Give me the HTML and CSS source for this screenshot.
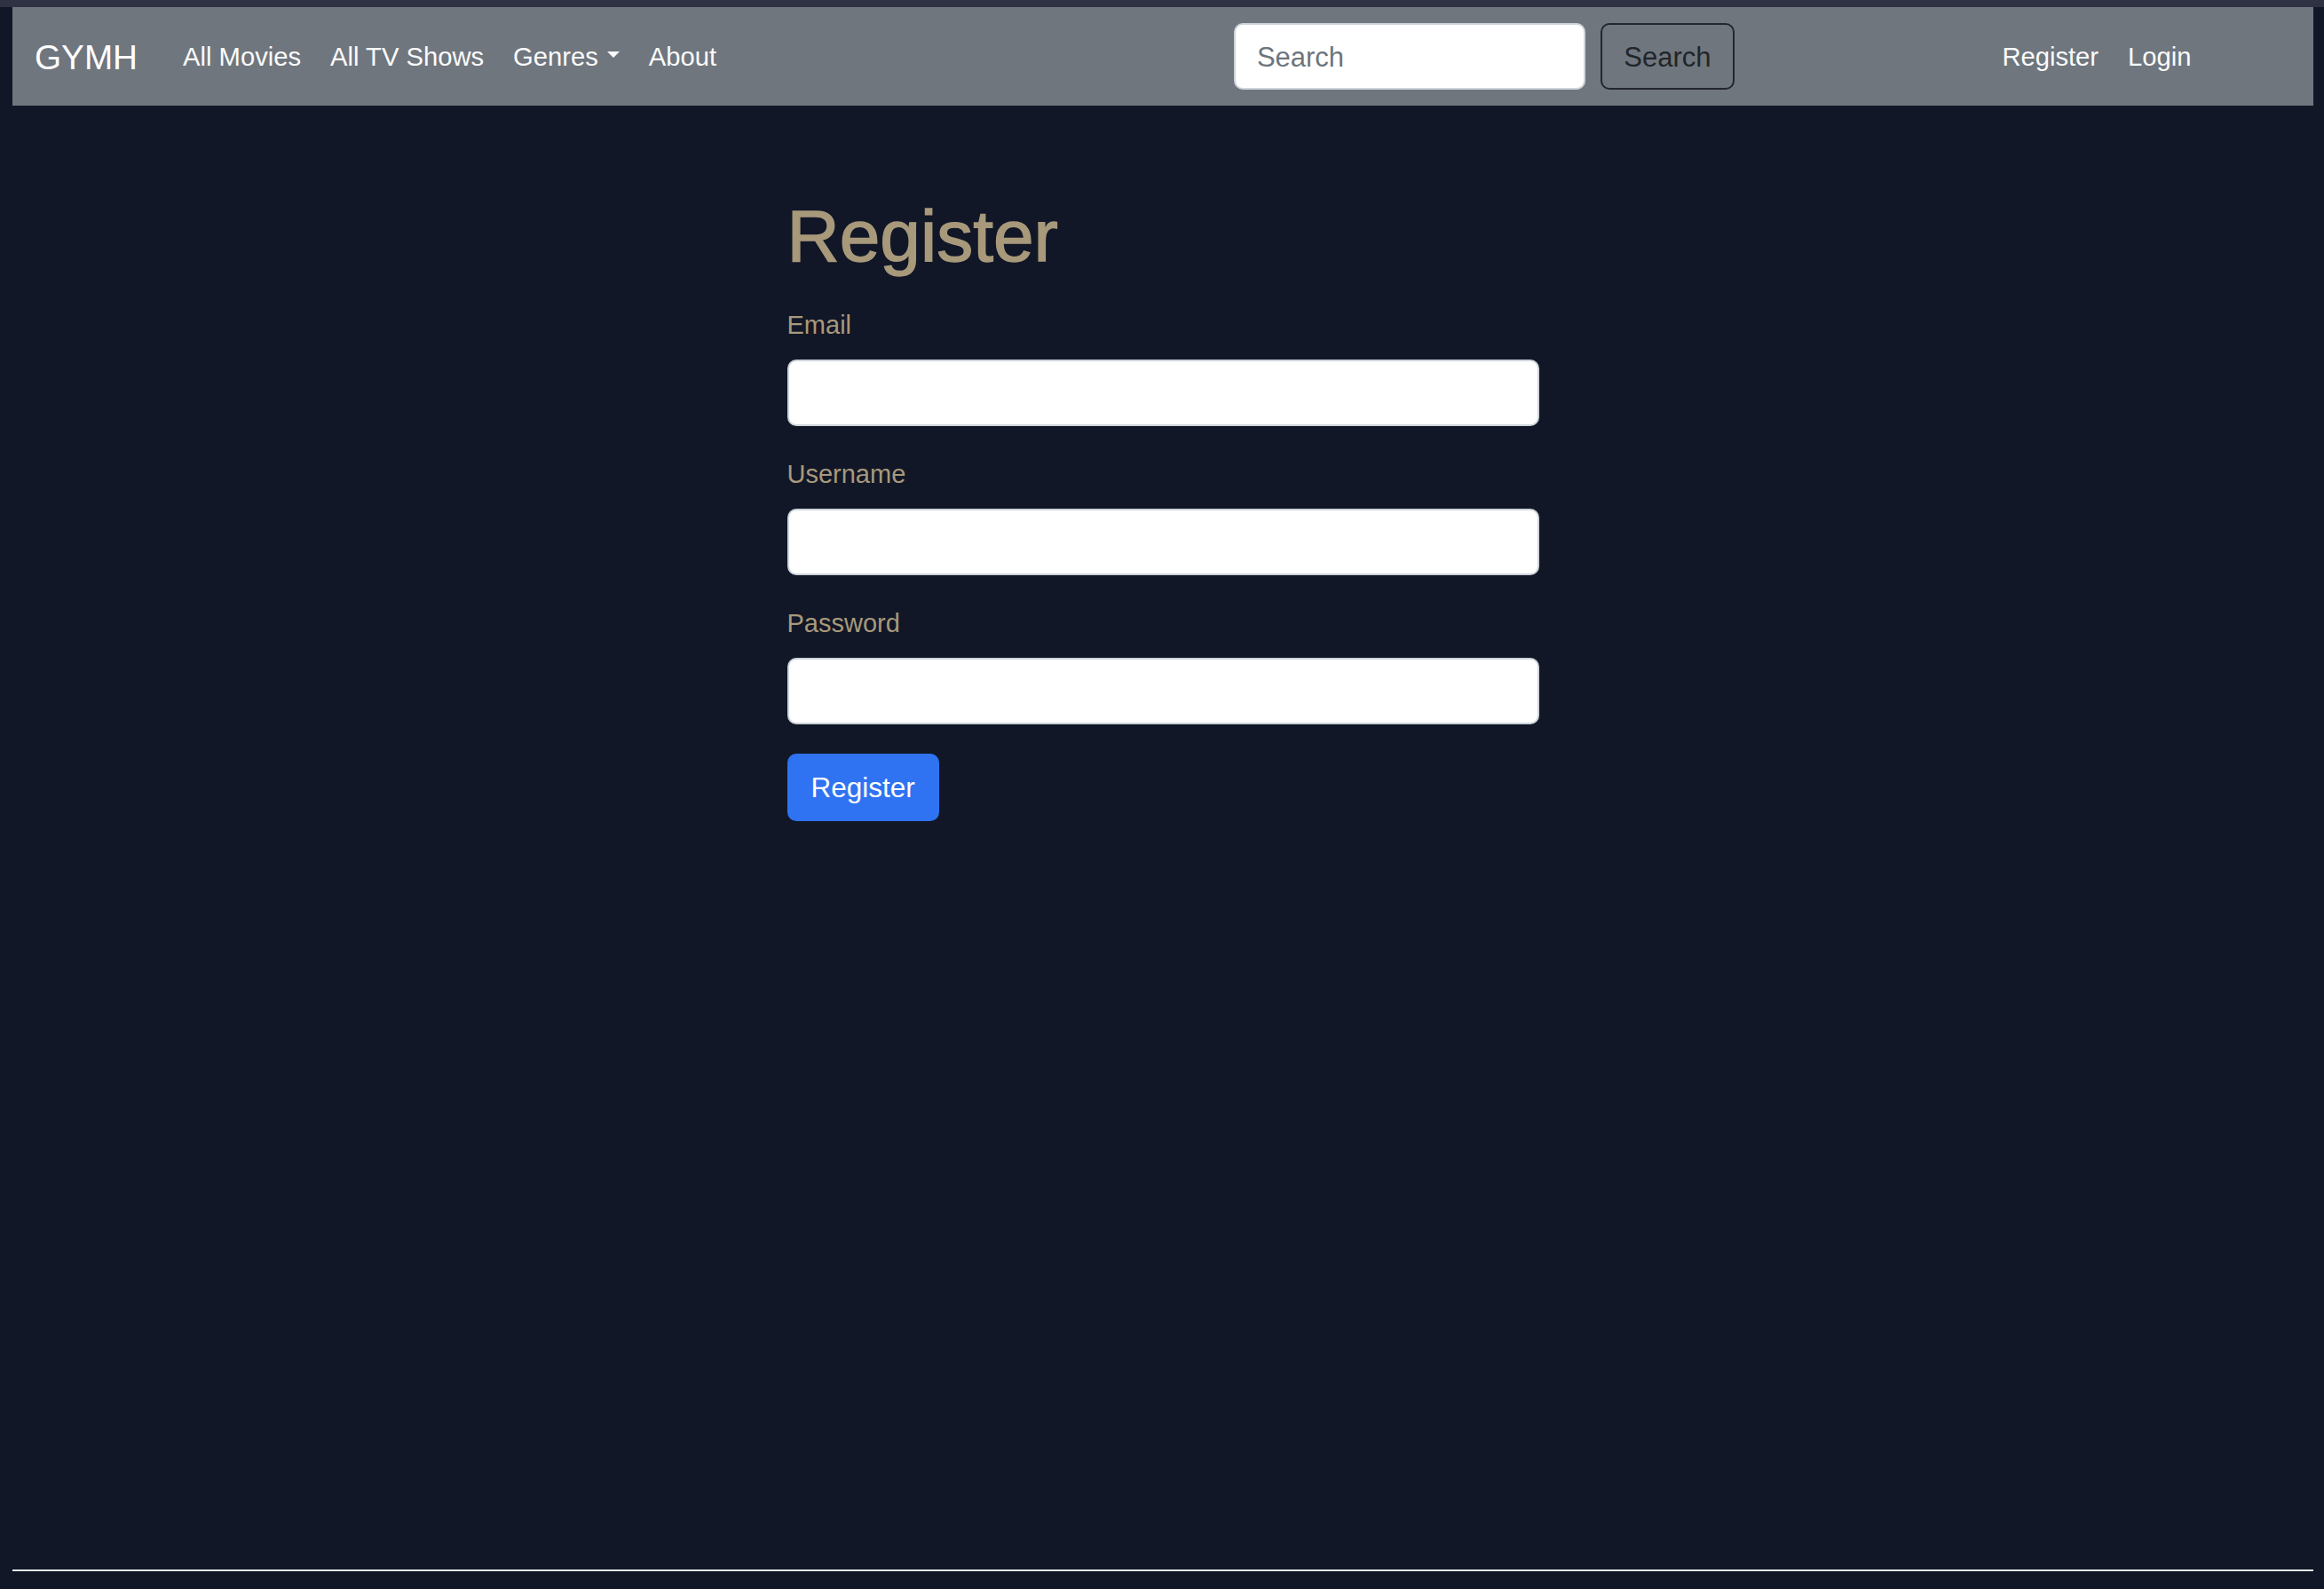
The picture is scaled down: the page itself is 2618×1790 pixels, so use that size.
FILE: index.html
```html
<!DOCTYPE html>
<html lang="en">
<head>
<meta charset="utf-8">
<title>Register - GYMH</title>
<link rel="stylesheet" href="styles.css">
</head>
<body>
<div class="topstrip"></div>
<div class="page">
  <nav class="navbar">
    <a class="brand" href="#">GYMH</a>
    <ul class="nav-links">
      <li><a class="nav-link" href="#">All Movies</a></li>
      <li><a class="nav-link" href="#">All TV Shows</a></li>
      <li><a class="nav-link" href="#">Genres<span class="caret"></span></a></li>
      <li><a class="nav-link" href="#">About</a></li>
    </ul>
    <form class="search-form">
      <input class="search-input" type="search" placeholder="Search">
      <button class="search-btn" type="button">Search</button>
    </form>
    <ul class="nav-links nav-right">
      <li><a class="nav-link" href="#">Register</a></li>
      <li><a class="nav-link" href="#">Login</a></li>
    </ul>
  </nav>
  <main class="main">
    <div class="register">
      <h1 class="title">Register</h1>
      <div class="field">
        <label class="label" for="email">Email</label>
        <input class="input" id="email" type="email">
      </div>
      <div class="field">
        <label class="label" for="username">Username</label>
        <input class="input" id="username" type="text">
      </div>
      <div class="field">
        <label class="label" for="password">Password</label>
        <input class="input" id="password" type="password">
      </div>
      <button class="btn-primary" type="button">Register</button>
    </div>
  </main>
  <footer class="footer"></footer>
</div>
</body>
</html>
```
FILE: styles.css
```css
* { box-sizing: border-box; }
html, body { margin: 0; padding: 0; }
body {
  background: #111727;
  font-family: "Liberation Sans", Arial, Helvetica, sans-serif;
  min-height: 100vh;
  display: flex;
  flex-direction: column;
}
.topstrip {
  height: 8px;
  background: #2f3242;
  flex: none;
}
.page {
  flex: 1;
  display: flex;
  flex-direction: column;
  padding: 0 12px 0 14px;
}
.navbar {
  height: 111px;
  background: #6f767e;
  display: flex;
  align-items: center;
  padding: 0 121px 0 25px;
}
.brand {
  color: #ffffff;
  text-decoration: none;
  font-size: 38.7px;
  line-height: 1.5;
  margin-right: 34.5px;
  padding-top: 4px;
}
.nav-links {
  list-style: none;
  margin: 0;
  padding: 0;
  display: flex;
  align-items: center;
}
.nav-link {
  display: block;
  color: #fbfbfb;
  text-decoration: none;
  font-size: 29.2px;
  line-height: 1.5;
  padding: 2px 16.5px 0;
}
.caret {
  display: inline-block;
  width: 0;
  height: 0;
  margin-left: 10px;
  vertical-align: 9px;
  border-top: 7px solid #fbfbfb;
  border-left: 7px solid transparent;
  border-right: 7px solid transparent;
}
.search-form {
  margin-left: auto;
  display: flex;
  align-items: center;
  gap: 17px;
}
.search-input {
  width: 396px;
  height: 75px;
  border: 2px solid #ced4da;
  border-radius: 10px;
  background: #ffffff;
  padding: 3px 24px 0;
  font-family: inherit;
  font-size: 31px;
  color: #212529;
  outline: none;
}
.search-input::placeholder { color: #6c757d; }
.search-btn {
  width: 151px;
  height: 75px;
  border: 2px solid #24272c;
  border-radius: 10px;
  background: transparent;
  color: #212529;
  font-family: inherit;
  font-size: 31px;
  padding: 3px 0 0;
}
.nav-right { margin-left: 285px; }
.main {
  flex: 1;
  padding-top: 99.5px;
}
.register {
  width: 847px;
  margin: 0 auto;
}
.title {
  margin: -1.5px 0 29.5px;
  font-size: 82px;
  line-height: 1.2;
  font-weight: 400;
  color: #a8997b;
  -webkit-text-stroke: 1.4px #a8997b;
}
.field {
  margin-bottom: 33px;
  display: flex;
  flex-direction: column;
}
.label {
  font-size: 29px;
  line-height: 1.5;
  color: #a8997b;
  margin-bottom: 16.5px;
}
.input {
  height: 75px;
  width: 100%;
  border: 2px solid #ced4da;
  border-radius: 10px;
  background: #ffffff;
  font-family: inherit;
  font-size: 31px;
  padding: 0 24px;
  outline: none;
}
.btn-primary {
  height: 76px;
  padding: 2px 25px 0;
  border: 2px solid #2f73f2;
  border-radius: 10px;
  background: #2f73f2;
  color: #ffffff;
  font-family: inherit;
  font-size: 31.5px;
}
.footer {
  flex: none;
  height: 22px;
  border-top: 2px solid #e5e7eb;
}
```
